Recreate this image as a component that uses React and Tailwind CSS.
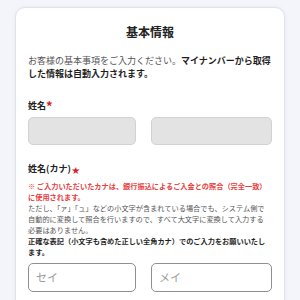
export default function App() {
  const font = { fontFamily: '"Noto Sans CJK JP", "Noto Sans", sans-serif' };

  return (
    <div className="min-h-[300px] bg-[#f3f5fb] px-[15px] pt-[7px]" style={font}>
      <div className="rounded-t-[10px] border border-[#dfe2ea] bg-white px-[12px] pt-[15px] pb-6 shadow-[0_0_4px_rgba(0,0,0,0.05)]">
        <h2 className="text-center text-[12px] leading-[18px] font-bold text-[#222]">基本情報</h2>

        <p className="mt-[13px] text-[9px] leading-[13px] text-[#555]">
          お客様の基本事項をご入力ください。<span className="font-bold text-[#1f1f1f]">マイナンバーから取得</span>
          <br />
          <span className="font-bold text-[#1f1f1f]">した情報は自動入力されます。</span>
        </p>

        <div className="mt-[19px] flex items-start text-[9px] leading-[13px] font-bold text-[#222]">
          姓名<span className="text-[13px] leading-[13px] text-[#d91c1c]">*</span>
        </div>
        <div className="mt-[5px] grid grid-cols-[108px_1fr] gap-[15px]">
          <div className="h-[28px] rounded-[5px] border border-[#d2d2d2] bg-[#e3e3e3]" />
          <div className="h-[28px] rounded-[5px] border border-[#d2d2d2] bg-[#e3e3e3]" />
        </div>

        <div className="mt-[17px] flex items-end text-[9px] leading-[13px] font-bold text-[#222]">
          姓名(カナ)<span className="ml-[1px] text-[8px] leading-[11px] text-[#d91c1c]">★</span>
        </div>

        <div className="mt-[6px] text-[7.2px] leading-[11px]">
          <p className="font-bold text-[#e8403e]">
            ※ ご入力いただいたカナは、銀行振込によるご入金との照合（完全一致）
            <br />
            に使用されます。
          </p>
          <p className="text-[#555]">
            ただし、「ァ」「ュ」などの小文字が含まれている場合でも、システム側で
            <br />
            自動的に変換して照合を行いますので、すべて大文字に変換して入力する
            <br />
            必要はありません。
          </p>
          <p className="font-bold text-[#1f1f1f]">
            正確な表記（小文字も含めた正しい全角カナ）でのご入力をお願いいたし
            <br />
            ます。
          </p>
        </div>

        <div className="mt-[5px] grid grid-cols-[108px_1fr] gap-[15px]">
          <div className="flex h-[29px] items-center rounded-[5px] border border-[#8f8f8f] px-[7px] text-[11px] text-[#9a9a9a]">
            セイ
          </div>
          <div className="flex h-[29px] items-center rounded-[5px] border border-[#8f8f8f] px-[7px] text-[11px] text-[#9a9a9a]">
            メイ
          </div>
        </div>
      </div>
    </div>
  );
}
